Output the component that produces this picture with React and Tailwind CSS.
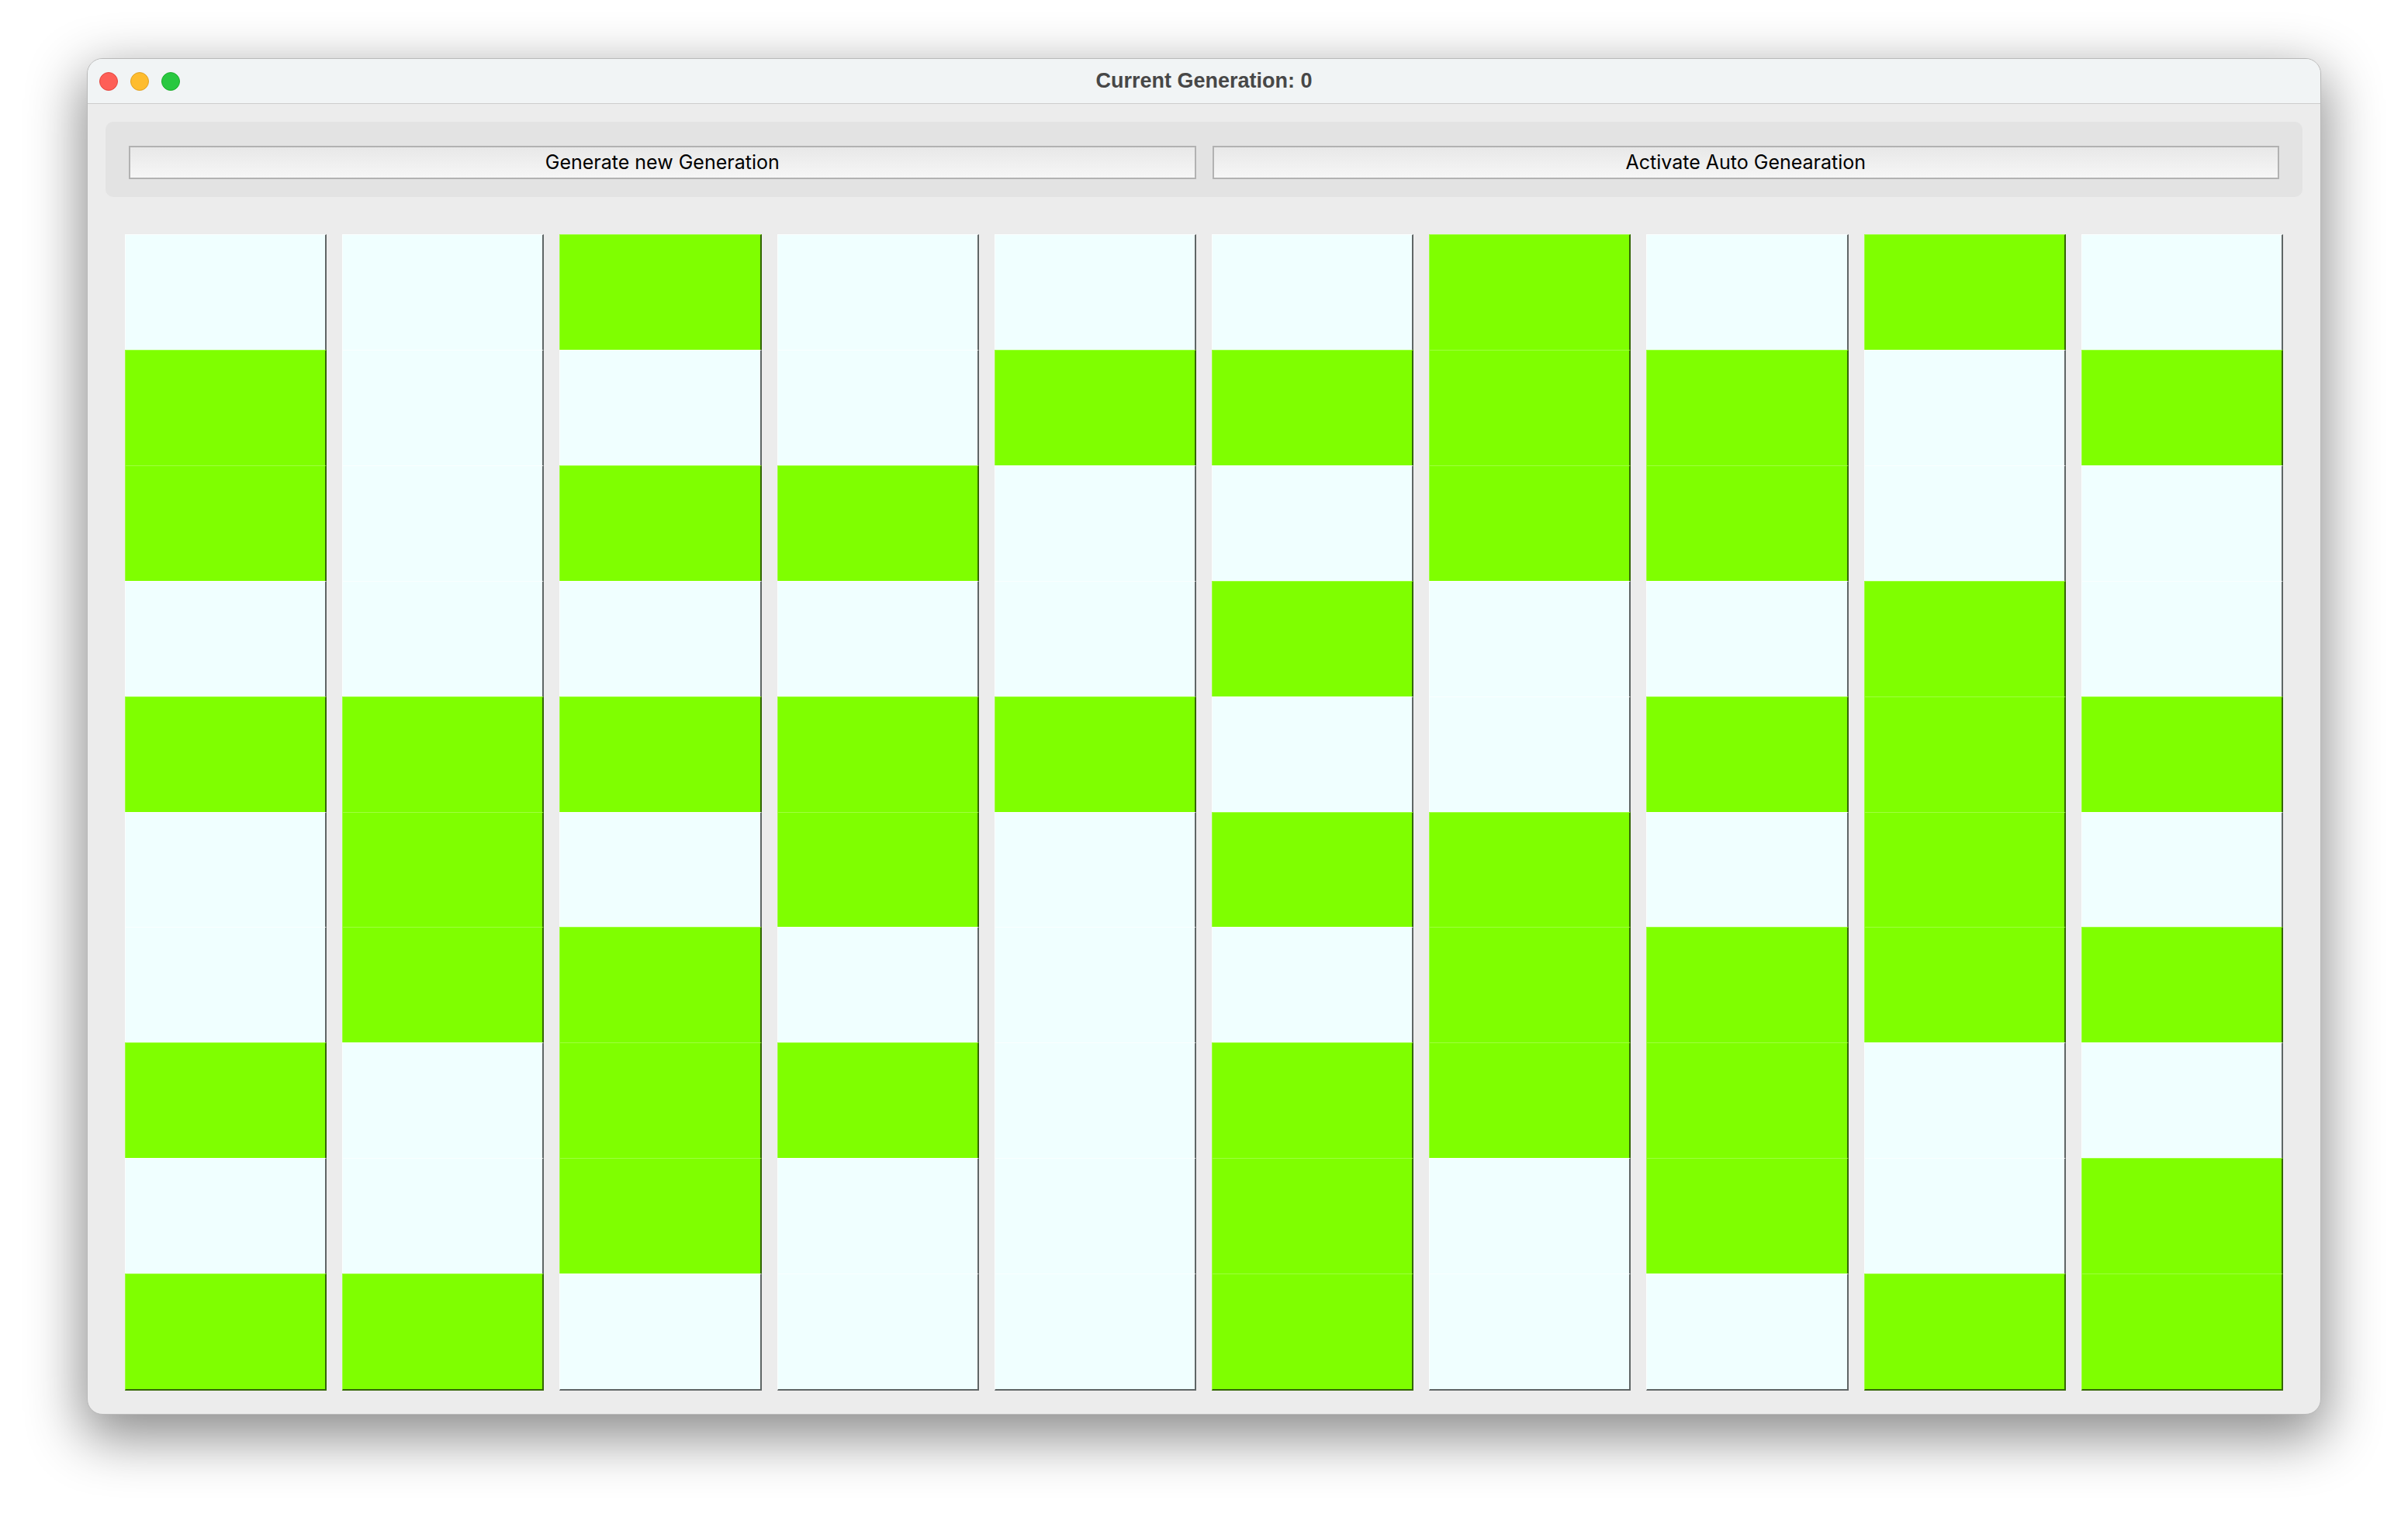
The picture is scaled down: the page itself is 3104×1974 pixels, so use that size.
import React from "react";

const COLS = [
  "CGGCGCCGCG",
  "CCCCGGGCCG",
  "GCGCGCGGGC",
  "CCGCGGCGCC",
  "CGCCGCCCCC",
  "CGCGCGCGGG",
  "GGGCCGGGCC",
  "CGGCGCGGGC",
  "GCCGGGGCCG",
  "CGCCGCGCGG",
];

function Cell({ green, last }) {
  return (
    <div
      className={
        (green ? "bg-[#7fff00] border-white/25 " : "bg-[#f0ffff] border-white/70 ") +
        "flex-1 border-t border-l border-r-2 border-r-black/60 " +
        (last ? "border-b-2 border-b-black/60" : "")
      }
    />
  );
}

export default function App() {
  return (
    <div className="w-[3104px] h-[1974px] bg-white pt-[75px] pl-[112px]">
      <div className="w-[2880px] h-[1749px] rounded-[20px] overflow-hidden border border-[#b9b9b9] bg-[#ececec] flex flex-col shadow-[0_24px_70px_6px_rgba(0,0,0,0.45)]">
        <div className="relative h-[58px] shrink-0 bg-[#f1f4f5] border-b border-[#cdcdcd] flex items-center">
          <div className="flex items-center gap-[16px] pl-[15px]">
            <div className="w-[24px] h-[24px] rounded-full bg-[#fe5f57] border border-[#e2463f]" />
            <div className="w-[24px] h-[24px] rounded-full bg-[#febc2e] border border-[#dfa023]" />
            <div className="w-[24px] h-[24px] rounded-full bg-[#29c840] border border-[#1dad2b]" />
          </div>
          <div className="absolute inset-0 flex items-center justify-center">
            <span className="text-[27px] font-bold text-[#474747] font-['Liberation_Sans',Arial,sans-serif]">
              Current Generation: 0
            </span>
          </div>
        </div>
        <div className="flex-1 flex flex-col px-[23px] pt-[23px]">
          <div className="h-[97px] shrink-0 rounded-[10px] bg-[#e3e3e3] px-[30px] pt-[31px] pb-[23px] flex gap-[21px]">
            <button className="flex-1 h-[43px] border-2 border-[#b2b2b2] bg-gradient-to-b from-[#e8e8e8] to-[#f6f6f6] text-[25px] text-black font-['Inter',sans-serif] flex items-center justify-center">
              Generate new Generation
            </button>
            <button className="flex-1 h-[43px] border-2 border-[#b2b2b2] bg-gradient-to-b from-[#e8e8e8] to-[#f6f6f6] text-[25px] text-black font-['Inter',sans-serif] flex items-center justify-center">
              Activate Auto Genearation
            </button>
          </div>
          <div className="mt-[48px] mx-[25px] h-[1491px] grid grid-cols-10 gap-x-[20px]">
            {COLS.map((col, i) => (
              <div key={i} className="flex flex-col h-full">
                {col.split("").map((c, j) => (
                  <Cell key={j} green={c === "G"} last={j === 9} />
                ))}
              </div>
            ))}
          </div>
        </div>
      </div>
    </div>
  );
}
